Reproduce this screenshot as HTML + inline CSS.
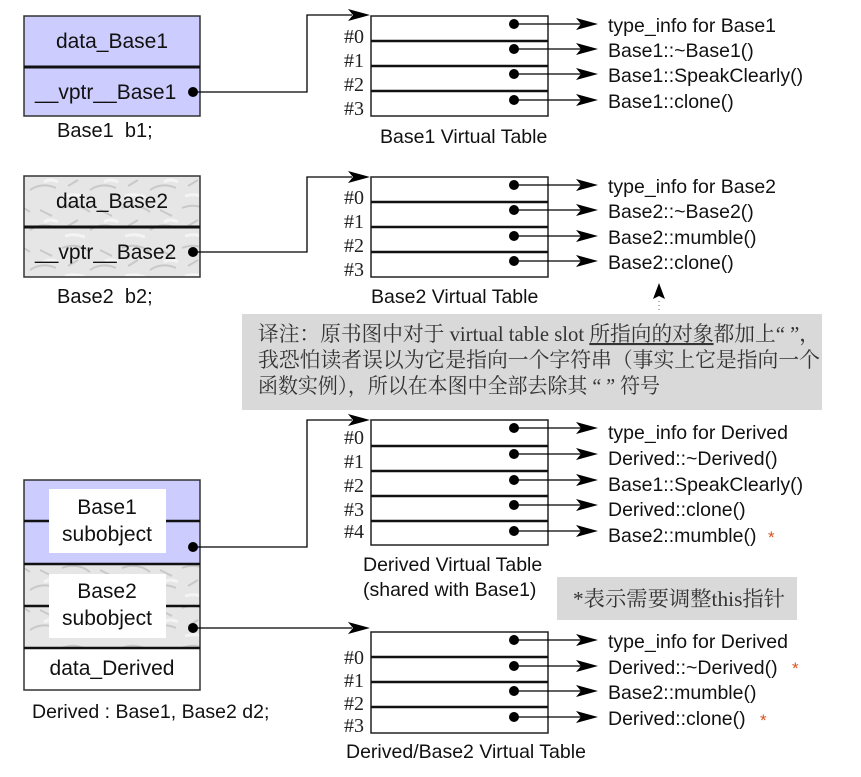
<!DOCTYPE html>
<html><head><meta charset="utf-8"><style>
html,body{margin:0;padding:0;background:#fff;}
svg{display:block}
.s{font-family:"Liberation Sans",sans-serif;font-size:19.5px;fill:#111}
.b{font-family:"Liberation Sans",sans-serif;font-size:21px;fill:#111}
.r{font-family:"Liberation Serif",serif;font-size:20px;fill:#222}
.c{font-family:"Liberation Serif","Noto Serif CJK SC",serif;font-size:21px;fill:#333}
.a{font-family:"Liberation Sans",sans-serif;font-size:17px;fill:#d9531e}
</style></head><body>
<svg width="861" height="777" viewBox="0 0 861 777" xmlns="http://www.w3.org/2000/svg">
<defs>
<pattern id="m" width="60" height="40" patternUnits="userSpaceOnUse">
<rect width="60" height="40" fill="#e6e6e6"/>
<path d="M2 8 q15 -6 28 4 M30 30 q12 -8 26 -2 M8 26 l10 -6 M40 10 l12 6" stroke="#c9c9c9" stroke-width="2" fill="none"/>
<path d="M5 36 q10 -3 20 1 M44 22 q6 -4 14 0" stroke="#f4f4f4" stroke-width="3" fill="none"/>
</pattern>
<path id="ah" d="M-22 -6 L0 0 L-22 6 L-17 0 Z" fill="#000"/>
</defs>

<!-- Base1 object -->
<rect x="24" y="16" width="176" height="100" fill="#ccccff" stroke="#333" stroke-width="1.5"/>
<line x1="24" y1="67" x2="200" y2="67" stroke="#111" stroke-width="3"/>
<text class="b" x="112" y="48" text-anchor="middle">data_Base1</text>
<text class="b" x="35" y="99">__vptr__Base1</text>
<circle cx="193" cy="92" r="5"/>
<polyline points="193,92 307,92 307,15 352,15" fill="none" stroke="#000" stroke-width="1.3"/>
<use href="#ah" x="370" y="15"/>
<text class="b" x="57" y="137" style="white-space:pre;font-size:20px">Base1  b1;</text>

<!-- Base2 object -->
<rect x="24" y="176" width="176" height="101" fill="url(#m)" stroke="#333" stroke-width="1.5"/>
<line x1="24" y1="227" x2="200" y2="227" stroke="#111" stroke-width="3"/>
<text class="b" x="112" y="208" text-anchor="middle">data_Base2</text>
<text class="b" x="35" y="259">__vptr__Base2</text>
<circle cx="193" cy="252" r="5"/>
<polyline points="193,252 307,252 307,177 352,177" fill="none" stroke="#000" stroke-width="1.3"/>
<use href="#ah" x="370" y="177"/>
<text class="b" x="57" y="303" style="white-space:pre;font-size:20px">Base2  b2;</text>

<!-- Derived object -->
<rect x="24" y="480" width="176" height="84" fill="#ccccff"/>
<rect x="24" y="564" width="176" height="84" fill="url(#m)"/>
<rect x="24" y="480" width="176" height="210" fill="none" stroke="#333" stroke-width="1.5"/>
<line x1="24" y1="521" x2="200" y2="521" stroke="#111" stroke-width="2.5"/>
<line x1="24" y1="564" x2="200" y2="564" stroke="#111" stroke-width="2.5"/>
<line x1="24" y1="606" x2="200" y2="606" stroke="#111" stroke-width="2.5"/>
<line x1="24" y1="648" x2="200" y2="648" stroke="#111" stroke-width="2.5"/>
<rect x="49" y="489" width="117" height="64" fill="#fff"/>
<rect x="49" y="574" width="117" height="64" fill="#fff"/>
<text class="b" x="107" y="514" text-anchor="middle">Base1</text>
<text class="b" x="107" y="541" text-anchor="middle">subobject</text>
<text class="b" x="107" y="598" text-anchor="middle">Base2</text>
<text class="b" x="107" y="625" text-anchor="middle">subobject</text>
<text class="b" x="112" y="675" text-anchor="middle">data_Derived</text>
<circle cx="193" cy="547" r="5"/>
<circle cx="193" cy="628" r="5"/>
<polyline points="193,547 307,547 307,420 352,420" fill="none" stroke="#000" stroke-width="1.3"/>
<use href="#ah" x="370" y="420"/>
<line x1="193" y1="628" x2="352" y2="628" stroke="#000" stroke-width="1.3"/>
<use href="#ah" x="370" y="628"/>
<text class="s" x="32" y="718">Derived : Base1, Base2 d2;</text>

<!-- Table 1 -->
<rect x="371" y="16" width="177" height="100" fill="#fff" stroke="#222" stroke-width="1.5"/>
<line x1="371" y1="41" x2="548" y2="41" stroke="#111" stroke-width="2.5"/>
<line x1="371" y1="66" x2="548" y2="66" stroke="#111" stroke-width="2.5"/>
<line x1="371" y1="91" x2="548" y2="91" stroke="#111" stroke-width="2.5"/>
<text class="r" x="344" y="43">#0</text><text class="r" x="344" y="67">#1</text><text class="r" x="344" y="91">#2</text><text class="r" x="344" y="115">#3</text>
<g stroke="#000" stroke-width="1.3">
<line x1="514" y1="24" x2="582" y2="24"/>
<line x1="514" y1="49" x2="582" y2="49"/>
<line x1="514" y1="74" x2="582" y2="74"/>
<line x1="514" y1="100" x2="582" y2="100"/>
</g>
<use href="#ah" x="598" y="24"/><use href="#ah" x="598" y="49"/><use href="#ah" x="598" y="74"/><use href="#ah" x="598" y="100"/>
<circle cx="514" cy="24" r="5"/><circle cx="514" cy="49" r="5"/><circle cx="514" cy="74" r="5"/><circle cx="514" cy="100" r="5"/>
<text class="s" x="608" y="32">type_info for Base1</text>
<text class="s" x="608" y="57">Base1::~Base1()</text>
<text class="s" x="608" y="82">Base1::SpeakClearly()</text>
<text class="s" x="608" y="108">Base1::clone()</text>
<text class="s" x="380" y="143">Base1 Virtual Table</text>

<!-- Table 2 -->
<rect x="371" y="177" width="177" height="100" fill="#fff" stroke="#222" stroke-width="1.5"/>
<line x1="371" y1="202" x2="548" y2="202" stroke="#111" stroke-width="2.5"/>
<line x1="371" y1="227" x2="548" y2="227" stroke="#111" stroke-width="2.5"/>
<line x1="371" y1="252" x2="548" y2="252" stroke="#111" stroke-width="2.5"/>
<text class="r" x="344" y="204">#0</text><text class="r" x="344" y="228">#1</text><text class="r" x="344" y="252">#2</text><text class="r" x="344" y="276">#3</text>
<g stroke="#000" stroke-width="1.3">
<line x1="514" y1="185" x2="582" y2="185"/>
<line x1="514" y1="210" x2="582" y2="210"/>
<line x1="514" y1="236" x2="582" y2="236"/>
<line x1="514" y1="261" x2="582" y2="261"/>
</g>
<use href="#ah" x="598" y="185"/><use href="#ah" x="598" y="210"/><use href="#ah" x="598" y="236"/><use href="#ah" x="598" y="261"/>
<circle cx="514" cy="185" r="5"/><circle cx="514" cy="210" r="5"/><circle cx="514" cy="236" r="5"/><circle cx="514" cy="261" r="5"/>
<text class="s" x="608" y="193">type_info for Base2</text>
<text class="s" x="608" y="218">Base2::~Base2()</text>
<text class="s" x="608" y="244">Base2::mumble()</text>
<text class="s" x="608" y="269">Base2::clone()</text>
<text class="s" x="371" y="303">Base2 Virtual Table</text>
<path d="M659 283 L665 299 L659 296 L653 299 Z" fill="#000"/>
<line x1="659" y1="301" x2="659" y2="310" stroke="#666" stroke-dasharray="1,3"/>

<!-- Note -->
<rect x="242" y="314" width="580" height="96" fill="#d9d9d9"/>
<text class="c" x="258" y="341" textLength="562" lengthAdjust="spacingAndGlyphs">译注：原书图中对于 virtual table slot <tspan text-decoration="underline">所指向的对象</tspan>都加上“ ”，</text>
<text class="c" x="258" y="367" textLength="562" lengthAdjust="spacingAndGlyphs">我恐怕读者误以为它是指向一个字符串（事实上它是指向一个</text>
<text class="c" x="258" y="393" textLength="402" lengthAdjust="spacingAndGlyphs">函数实例），所以在本图中全部去除其 “ ” 符号</text>

<!-- Derived table -->
<rect x="371" y="420" width="177" height="125" fill="#fff" stroke="#222" stroke-width="1.5"/>
<line x1="371" y1="446" x2="548" y2="446" stroke="#111" stroke-width="2.5"/>
<line x1="371" y1="471" x2="548" y2="471" stroke="#111" stroke-width="2.5"/>
<line x1="371" y1="496" x2="548" y2="496" stroke="#111" stroke-width="2.5"/>
<line x1="371" y1="521" x2="548" y2="521" stroke="#111" stroke-width="2.5"/>
<text class="r" x="344" y="444">#0</text><text class="r" x="344" y="468">#1</text><text class="r" x="344" y="492">#2</text><text class="r" x="344" y="516">#3</text><text class="r" x="344" y="538">#4</text>
<g stroke="#000" stroke-width="1.3">
<line x1="514" y1="428" x2="582" y2="428"/>
<line x1="514" y1="454" x2="582" y2="454"/>
<line x1="514" y1="480" x2="582" y2="480"/>
<line x1="514" y1="505" x2="582" y2="505"/>
<line x1="514" y1="531" x2="582" y2="531"/>
</g>
<use href="#ah" x="598" y="428"/><use href="#ah" x="598" y="454"/><use href="#ah" x="598" y="480"/><use href="#ah" x="598" y="505"/><use href="#ah" x="598" y="531"/>
<circle cx="514" cy="428" r="5"/><circle cx="514" cy="454" r="5"/><circle cx="514" cy="480" r="5"/><circle cx="514" cy="505" r="5"/><circle cx="514" cy="531" r="5"/>
<text class="s" x="608" y="439">type_info for Derived</text>
<text class="s" x="608" y="465">Derived::~Derived()</text>
<text class="s" x="608" y="491">Base1::SpeakClearly()</text>
<text class="s" x="608" y="516">Derived::clone()</text>
<text class="s" x="608" y="542">Base2::mumble()</text>
<text class="a" x="768" y="543">*</text>
<text class="s" x="363" y="571">Derived Virtual Table</text>
<text class="s" x="363" y="596">(shared with Base1)</text>

<rect x="557" y="577" width="240" height="43" fill="#d9d9d9"/>
<text class="c" x="573" y="606" textLength="212" lengthAdjust="spacingAndGlyphs">*表示需要调整this指针</text>

<!-- Derived/Base2 table -->
<rect x="371" y="632" width="177" height="101" fill="#fff" stroke="#222" stroke-width="1.5"/>
<line x1="371" y1="657" x2="548" y2="657" stroke="#111" stroke-width="2.5"/>
<line x1="371" y1="682" x2="548" y2="682" stroke="#111" stroke-width="2.5"/>
<line x1="371" y1="707" x2="548" y2="707" stroke="#111" stroke-width="2.5"/>
<text class="r" x="344" y="664">#0</text><text class="r" x="344" y="687">#1</text><text class="r" x="344" y="710">#2</text><text class="r" x="344" y="732">#3</text>
<g stroke="#000" stroke-width="1.3">
<line x1="514" y1="640" x2="582" y2="640"/>
<line x1="514" y1="666" x2="582" y2="666"/>
<line x1="514" y1="691" x2="582" y2="691"/>
<line x1="514" y1="717" x2="582" y2="717"/>
</g>
<use href="#ah" x="598" y="640"/><use href="#ah" x="598" y="666"/><use href="#ah" x="598" y="691"/><use href="#ah" x="598" y="717"/>
<circle cx="514" cy="640" r="5"/><circle cx="514" cy="666" r="5"/><circle cx="514" cy="691" r="5"/><circle cx="514" cy="717" r="5"/>
<text class="s" x="608" y="648">type_info for Derived</text>
<text class="s" x="608" y="674">Derived::~Derived()</text>
<text class="s" x="608" y="699">Base2::mumble()</text>
<text class="s" x="608" y="725">Derived::clone()</text>
<text class="a" x="792" y="674">*</text>
<text class="a" x="760" y="726">*</text>
<text class="s" x="346" y="758">Derived/Base2 Virtual Table</text>
</svg>
</body></html>
